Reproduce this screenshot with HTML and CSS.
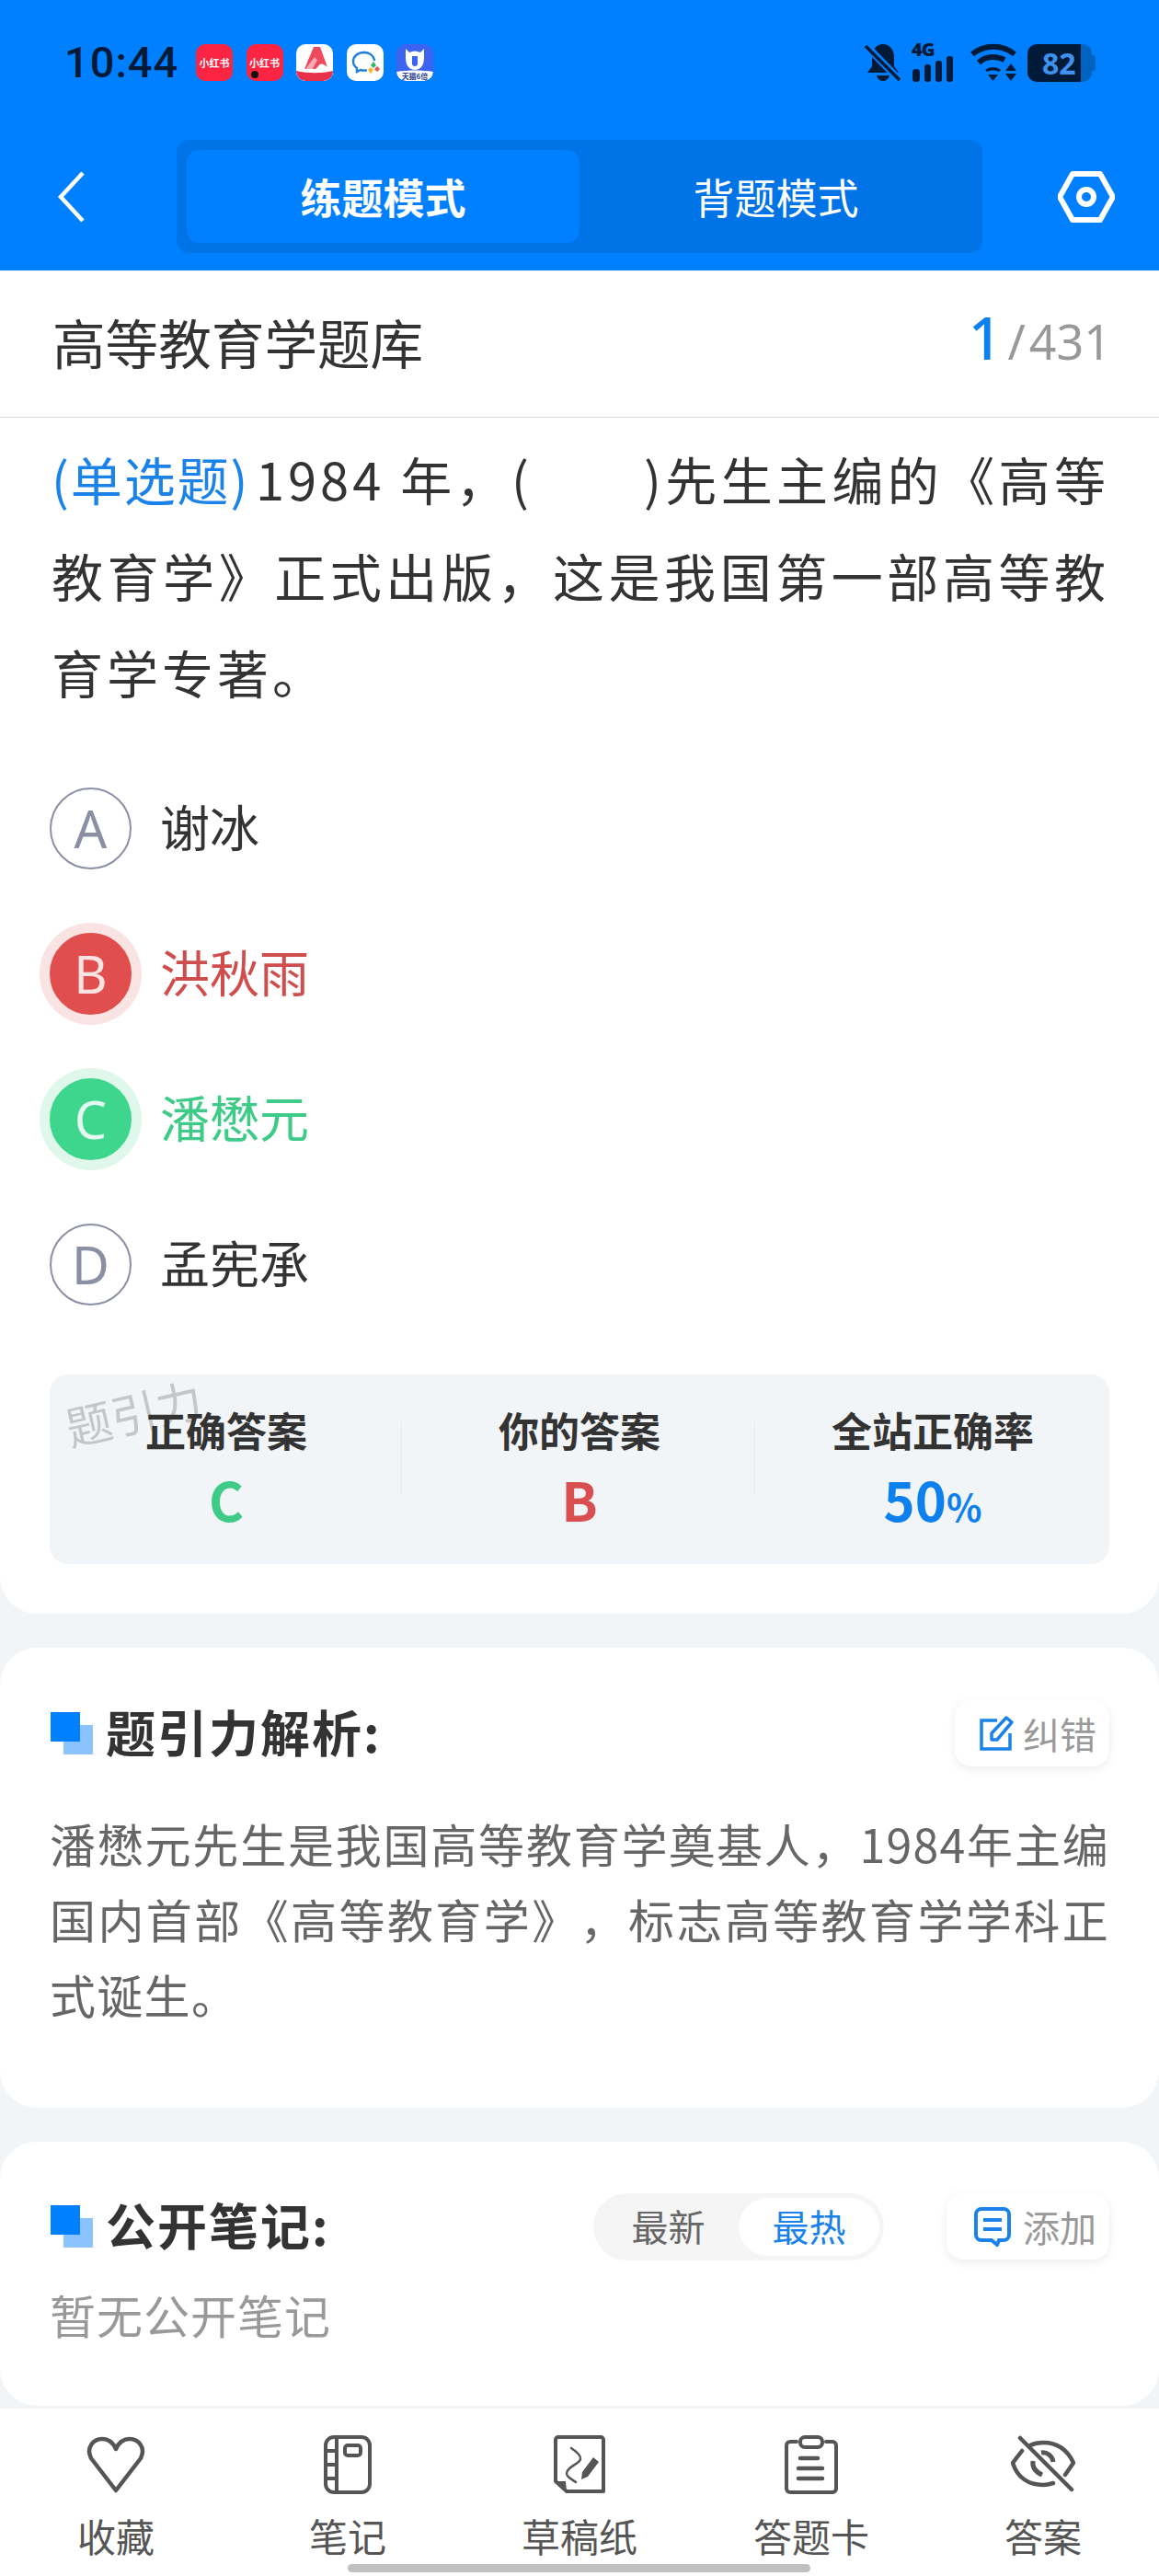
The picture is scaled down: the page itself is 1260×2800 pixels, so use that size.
FILE: index.html
```html
<!DOCTYPE html>
<html lang="zh-CN">
<head>
    <meta charset="UTF-8">
    <meta name="viewport" content="width=device-width, initial-scale=1.0">
    <title>高等教育学题库</title>
    <link rel="stylesheet" href="styles.css">
</head>
<body>
<div class="page">

    <!-- 顶部蓝色区域 -->
    <header class="header">
        <div class="status">
            <span class="time">10:44</span>
            <div class="apps">
                <div class="app red"><span>小红书</span></div>
                <div class="app red dot"><span>小红书</span></div>
                <div class="app white">
                    <svg viewBox="0 0 40 40" width="40" height="40">
                        <path d="M19 3h7l8 22c-4-4-8-5-10-1l-3 3H9z" fill="#ef4a5c"/>
                        <path d="M23 17l-5 10h-8l10-13z" fill="#f9a9b2"/>
                        <path d="M0 29c13 3 27 3 40 0v1a10 10 0 0 1-10 10H10A10 10 0 0 1 0 30z" fill="#e8304a"/>
                    </svg>
                </div>
                <div class="app white">
                    <svg viewBox="0 0 40 40" width="40" height="40">
                        <path d="M19 9c-7 0-12 4-12 10 0 3 1 5 4 7v4l4-2c2 .6 4 .8 6 .5" fill="none" stroke="#1f7fd8" stroke-width="2.400" stroke-linecap="round"/>
                        <path d="M19 9c5 0 10 3 11 8" fill="none" stroke="#1f7fd8" stroke-width="2.400" stroke-linecap="round"/>
                        <path d="M29 19l3 4-3 3-3-3z" fill="#38b56a"/>
                        <path d="M33 24l3 3-3 3-3-3z" fill="#f0524a"/>
                        <path d="M26 25l3 3-3 4-3-4z" fill="#f5b82e"/>
                    </svg>
                </div>
                <div class="app blue">
                    <svg viewBox="0 0 40 40" width="40" height="40">
                        <path d="M10 5l4 4c4-2 8-2 12 0l4-4v10c0 8-4 13-10 13S10 23 10 15z" fill="#fff"/>
                        <path d="M17 13h6v8a3 3 0 0 1-6 0z" fill="#3d64f0"/>
                        <path d="M0 30c13-2 27-2 40 0a10 10 0 0 1-10 10H10A10 10 0 0 1 0 30z" fill="#fff"/>
                        <text x="20" y="38" text-anchor="middle" font-size="8" font-weight="700" fill="#24408f">天猫6倍</text>
                    </svg>
                </div>
            </div>
            <div class="sys">
                <svg class="bell" viewBox="0 0 40 42" width="40" height="42">
                    <path d="M20 1c7 0 12 6 12 14v10l5 7H3l5-7V15C8 7 13 1 20 1z" fill="#001a38"/>
                    <path d="M13 35h14c-1 4-4 6-7 6s-6-2-7-6z" fill="#001a38"/>
                    <path d="M2 3l36 37" stroke="#0080ff" stroke-width="8"/>
                    <path d="M1 3l37 37" stroke="#001a38" stroke-width="3.500"/>
                </svg>
                <div class="signal">
                    <span class="net">4G</span>
                    <svg viewBox="0 0 48 28" width="48" height="28">
                        <rect x="1" y="14" width="8" height="14" rx="3.500"/>
                        <rect x="14" y="9" width="7" height="19" rx="3"/>
                        <rect x="26" y="5" width="7" height="23" rx="3"/>
                        <rect x="38" y="0" width="7" height="28" rx="3"/>
                    </svg>
                </div>
                <svg class="wifi" viewBox="0 0 52 42" width="52" height="42">
                    <path d="M3 12c13-11 33-11 46 0" fill="none" stroke="#001a38" stroke-width="6"/>
                    <path d="M10 21c9-8 23-8 32 0" fill="none" stroke="#001a38" stroke-width="6" stroke-dasharray="30 30"/>
                    <path d="M17 29c5-4 12-4 17 0l-2 2c-4-2-9-2-13 0z" fill="#001a38"/>
                    <path d="M20 34h11l-5.500 7z" fill="#001a38"/>
                    <path d="M45 22l6 8H39zM39 33h12l-6 8z" fill="#001a38"/>
                </svg>
                <div class="battery"><span class="level">82</span><i class="cap"></i></div>
            </div>
        </div>
        <nav class="topbar">
            <svg class="back" viewBox="0 0 32 56" width="32" height="56">
                <path d="M28 2L4 28l24 26" fill="none" stroke="#fff" stroke-width="4.500"/>
            </svg>
            <div class="tabs">
                <div class="tab on">练题模式</div>
                <div class="tab">背题模式</div>
            </div>
            <svg class="gear" viewBox="0 0 62 56" width="62" height="56">
                <path d="M2 28L16 3h30l14 25-14 25H16z" fill="none" stroke="#fff" stroke-width="6" stroke-linejoin="round"/>
                <circle cx="31" cy="28" r="8" fill="none" stroke="#fff" stroke-width="6"/>
            </svg>
        </nav>
    </header>

    <!-- 题目 -->
    <section class="card question">
        <div class="title-row">
            <span class="bank">高等教育学题库</span>
            <span class="count"><b>1</b><i>/</i>431</span>
        </div>
        <p class="stem"><span class="kind">(单选题)</span>1984 年，(　　)先生主编的《高等教育学》正式出版，这是我国第一部高等教育学专著。</p>
        <ul class="opts">
            <li class="opt"><span class="mark">A</span><span class="opt-text">谢冰</span></li>
            <li class="opt wrong"><span class="mark">B</span><span class="opt-text">洪秋雨</span></li>
            <li class="opt right"><span class="mark">C</span><span class="opt-text">潘懋元</span></li>
            <li class="opt"><span class="mark">D</span><span class="opt-text">孟宪承</span></li>
        </ul>
        <div class="stats">
            <span class="wm">题引力</span>
            <div class="stat">
                <div class="stat-name">正确答案</div>
                <div class="stat-val green">C</div>
            </div>
            <div class="stat">
                <div class="stat-name">你的答案</div>
                <div class="stat-val redtext">B</div>
            </div>
            <div class="stat">
                <div class="stat-name">全站正确率</div>
                <div class="stat-val bluetext">50<small>%</small></div>
            </div>
        </div>
    </section>

    <!-- 解析 -->
    <section class="card analysis">
        <div class="sec-head">
            <h2 class="sec-title"><i class="sq"></i>题引力解析:</h2>
            <div class="mini-btn">
                <svg viewBox="0 0 40 40" width="40" height="40">
                    <path d="M20 6H3v31h31V20" fill="none" stroke="#1a82e8" stroke-width="3.500"/>
                    <path d="M14 27v-7L30 3l6 5-16 19z" fill="none" stroke="#1a82e8" stroke-width="3.500" stroke-linejoin="round"/>
                </svg>
                纠错
            </div>
        </div>
        <p class="explain">潘懋元先生是我国高等教育学奠基人，1984年主编国内首部《高等教育学》，标志高等教育学学科正式诞生。</p>
    </section>

    <!-- 笔记 -->
    <section class="card notes">
        <div class="sec-head">
            <h2 class="sec-title"><i class="sq"></i>公开笔记:</h2>
            <div class="seg">
                <span class="seg-item">最新</span>
                <span class="seg-item on">最热</span>
            </div>
            <div class="mini-btn add">
                <svg viewBox="0 0 42 44" width="42" height="44">
                    <path d="M9 3h24a6 6 0 0 1 6 6v22a6 6 0 0 1-6 6h-5l-2 5-6-5H9a6 6 0 0 1-6-6V9a6 6 0 0 1 6-6z" fill="none" stroke="#1a82e8" stroke-width="4"/>
                    <path d="M11 15h20M11 25h20" stroke="#1a82e8" stroke-width="4"/>
                </svg>
                添加
            </div>
        </div>
        <p class="empty">暂无公开笔记</p>
    </section>

    <!-- 底部栏 -->
    <footer class="tabbar">
        <div class="item">
            <svg viewBox="0 0 64 64" width="64" height="64">
                <path d="M32 60L5 25C-1 13 8 4 17 4c7 0 12 4 15 11C35 8 40 4 47 4c9 0 18 9 12 21z" fill="none" stroke="#555" stroke-width="4.500" stroke-linejoin="round"/>
            </svg>
            <span>收藏</span>
        </div>
        <div class="item">
            <svg viewBox="0 0 64 64" width="64" height="64">
                <rect x="8" y="2" width="48" height="60" rx="9" fill="none" stroke="#555" stroke-width="4"/>
                <path d="M20 2v60M8 17h12M8 32h12M8 47h12" stroke="#555" stroke-width="4"/>
                <rect x="29" y="11" width="17" height="11" rx="3" fill="none" stroke="#555" stroke-width="4"/>
            </svg>
            <span>笔记</span>
        </div>
        <div class="item">
            <svg viewBox="0 0 64 64" width="64" height="64">
                <path d="M6 50V5a3 3 0 0 1 3-3h46a3 3 0 0 1 3 3v56H18z" fill="none" stroke="#555" stroke-width="4" stroke-linejoin="round"/>
                <path d="M6 50l11 0 1 12z" fill="#555"/>
                <path d="M23 14c6 4 11 8 10 12-1 5-14 8-15 15-1 4 6 7 10 10" fill="none" stroke="#555" stroke-width="2.500" stroke-linecap="round"/>
                <path d="M47 24l6 5-12 16-7 3 1-8z" fill="#555"/>
            </svg>
            <span>草稿纸</span>
        </div>
        <div class="item">
            <svg viewBox="0 0 64 64" width="64" height="64">
                <path d="M16 7H9a4 4 0 0 0-4 4v47a4 4 0 0 0 4 4h46a4 4 0 0 0 4-4V11a4 4 0 0 0-4-4h-7" fill="none" stroke="#555" stroke-width="4" stroke-linecap="round"/>
                <rect x="20" y="2" width="24" height="11" rx="5" fill="none" stroke="#555" stroke-width="4"/>
                <path d="M20 25h19M18 36h26M18 47h26" stroke="#555" stroke-width="4.500" stroke-linecap="round"/>
            </svg>
            <span>答题卡</span>
        </div>
        <div class="item">
            <svg viewBox="0 0 70 64" width="70" height="64">
                <path d="M12 17L2 30c5 16 17 24 33 24 4 0 8-1 11-2M21 11c4-2 9-3 14-3 16 0 27 9 33 22l-9 13" fill="none" stroke="#555" stroke-width="4.500" stroke-linecap="round"/>
                <path d="M10 3l56 56" stroke="#555" stroke-width="4.500" stroke-linecap="round"/>
                <path d="M33 19c6-1 12 3 13 10M24 28c-1 7 3 12 10 15" fill="none" stroke="#555" stroke-width="5"/>
            </svg>
            <span>答案</span>
        </div>
        <i class="home-bar"></i>
    </footer>
</div>
</body>
</html>
```

FILE: styles.css
```css
* {
    box-sizing: border-box;
}

body {
    margin: 0;
    background: #f2f5f8;
    font-family: "Noto Sans CJK SC", "Noto Sans", sans-serif;
    color: #333;
    text-spacing-trim: space-all;
}

.page {
    position: relative;
    width: 1260px;
    height: 2800px;
    overflow: hidden;
    display: flex;
    flex-direction: column;
}

/* header */
.header {
    height: 294px;
    background: #0080ff;
    padding-top: 47px;
}

.status {
    height: 42px;
    padding: 0 70px;
    display: flex;
    align-items: center;
}

.time {
    font-family: Roboto, sans-serif;
    font-size: 47px;
    font-weight: 500;
    line-height: 42px;
    color: #001a38;
    letter-spacing: 1px;
    width: 143px;
}

.apps {
    display: flex;
    gap: 14.500px;
}

.app {
    width: 40px;
    height: 40px;
    border-radius: 10px;
    overflow: hidden;
    position: relative;
    display: flex;
    align-items: center;
    justify-content: center;
    font-size: 11px;
    font-weight: 700;
    color: #fff;
    white-space: nowrap;
}

.app.red { background: #fb2543; }
.app.white { background: #fff; }
.app.blue { background: #3d64f0; }

.app.dot::after {
    content: "";
    position: absolute;
    left: 5px;
    bottom: 3px;
    width: 8px;
    height: 8px;
    border-radius: 50%;
    background: #111;
}

.sys {
    margin-left: auto;
    margin-right: -1px;
    display: flex;
    align-items: center;
}

.bell {
    margin-right: 11px;
}

.signal {
    width: 50px;
    height: 42px;
    position: relative;
    margin-right: 13px;
}

.signal svg {
    position: absolute;
    left: 0;
    bottom: 0;
    fill: #001a38;
}

.net {
    position: absolute;
    left: 0;
    top: -4px;
    font-family: "Open Sans", sans-serif;
    font-size: 20px;
    font-weight: 800;
    line-height: 22px;
    letter-spacing: -1px;
    color: #001a38;
}

.wifi {
    margin-right: 11px;
}

.battery {
    position: relative;
    width: 70px;
    height: 41px;
    border-radius: 10px;
    background: linear-gradient(90deg, #001a38 0, #001a38 58px, #0063c0 58px);
    margin-right: 4px;
}

.level {
    display: block;
    padding-left: 16px;
    font-family: "Open Sans", sans-serif;
    font-size: 32px;
    font-weight: 700;
    line-height: 41px;
    color: #3d92ee;
}

.cap {
    position: absolute;
    right: -4px;
    top: 12px;
    width: 4px;
    height: 17px;
    border-radius: 0 3px 3px 0;
    background: #0063c0;
}

.topbar {
    margin-top: 63px;
    height: 123px;
    display: flex;
    align-items: center;
    padding-left: 62px;
}

.back {
    margin-right: 98px;
}

.tabs {
    width: 876px;
    height: 123px;
    padding: 11px;
    border-radius: 14px;
    background: #0073e6;
    display: flex;
}

.tab {
    flex: 1;
    text-align: center;
    font-size: 45px;
    line-height: 101px;
    color: #fff;
    border-radius: 14px;
}

.tab.on {
    background: #0080ff;
    font-weight: 700;
}

.gear {
    margin-left: 82px;
}

/* cards */
.card {
    background: #fff;
    border-radius: 40px;
}

.question {
    height: 1460px;
    border-radius: 0 0 40px 40px;
}

.title-row {
    height: 160px;
    padding: 0 52px 6px 57px;
    border-bottom: 1px solid #d9d9d9;
    display: flex;
    align-items: center;
    justify-content: space-between;
}

.bank {
    font-size: 57.600px;
    line-height: 80px;
    color: #333;
}

.count {
    font-family: "Noto Sans", sans-serif;
    font-size: 52px;
    line-height: 80px;
    color: #999;
    display: flex;
    align-items: baseline;
    margin-bottom: 3px;
}

.count b {
    font-size: 64px;
    font-weight: 500;
    color: #0d80ee;
}

.count i {
    font-style: normal;
    margin: 0 4px 0 6px;
}

.stem {
    margin: 13px 54px 0 56px;
    font-size: 56px;
    line-height: 105px;
    letter-spacing: 4px;
    text-align: justify;
}

.kind {
    color: #1a82e8;
    letter-spacing: 1.500px;
    margin-right: 7px;
}

.opts {
    list-style: none;
    margin: 39px 0 0;
    padding: 0 54px;
}

.opt {
    height: 158px;
    display: flex;
    align-items: center;
    font-size: 54px;
    color: #333;
}

.opt-text {
    margin-bottom: 6px;
}

.mark {
    width: 89px;
    height: 89px;
    margin-right: 31px;
    border-radius: 50%;
    border: 2px solid #8b8fa3;
    display: flex;
    align-items: center;
    justify-content: center;
    font-family: "Noto Sans", sans-serif;
    font-weight: 400;
    font-size: 56px;
    color: #8b8fa3;
}

.wrong { color: #cf4d4d; }
.right { color: #3ecb87; }

.wrong .mark {
    background: #e04e4e;
    border-color: #e04e4e;
    color: #fbe3e3;
    box-shadow: 0 0 0 11px #f9e3e3;
}

.right .mark {
    background: #3dd68c;
    border-color: #3dd68c;
    color: #e4f9ef;
    box-shadow: 0 0 0 11px #e0f7ec;
}

.stats {
    position: relative;
    margin: 41px 54px 0;
    height: 206px;
    padding-top: 30px;
    border-radius: 20px;
    background: #f2f5f8;
    display: grid;
    grid-template-columns: repeat(3, 1fr);
}

.stat {
    position: relative;
    text-align: center;
}

.stat + .stat::before {
    content: "";
    position: absolute;
    left: -2px;
    top: 22px;
    width: 1px;
    height: 78px;
    background: #e6e9ec;
}

.stat-name {
    font-size: 44px;
    font-weight: 700;
    line-height: 60px;
}

.stat-val {
    margin-top: 5px;
    font-size: 58px;
    font-weight: 700;
    line-height: 80px;
}

.stat-val small {
    font-size: 40px;
}

.green { color: #3ecb87; }
.redtext { color: #d94f4f; }
.bluetext { color: #0d80ee; }

.wm {
    position: absolute;
    left: 16px;
    top: 10px;
    font-size: 50px;
    line-height: 60px;
    color: rgba(90, 90, 90, .3);
    transform: rotate(-13deg);
}

/* analysis + notes */
.analysis {
    margin-top: 37px;
    height: 500px;
    padding: 57px 54px 0;
}

.notes {
    margin-top: 37px;
    height: 287px;
    padding: 56px 54px 0;
}

.sec-head {
    height: 72px;
    display: flex;
    align-items: center;
}

.sec-title {
    margin: 0;
    font-size: 54px;
    font-weight: 700;
    line-height: 68px;
    letter-spacing: 2px;
    display: flex;
    align-items: center;
    color: #333;
    padding-bottom: 4px;
}

.sq {
    position: relative;
    width: 46px;
    height: 46px;
    margin: 4px 14px 0 1px;
    background: linear-gradient(#8bc3ff, #8bc3ff) right bottom / 32px 32px no-repeat;
}

.sq::before {
    content: "";
    position: absolute;
    left: 0;
    top: 0;
    width: 32px;
    height: 32px;
    background: #0080ff;
}

.mini-btn {
    margin-left: auto;
    height: 72px;
    padding: 0 14px 0 26px;
    border-radius: 18px;
    background: #fff;
    box-shadow: 0 3px 10px rgba(0, 0, 0, .08);
    display: flex;
    align-items: center;
    gap: 8px;
    font-size: 40px;
    line-height: 72px;
    color: #999;
}

.mini-btn.add {
    margin-left: 68px;
    padding: 0 14px 0 29px;
    gap: 12px;
}

.seg {
    margin-left: auto;
    width: 316px;
    height: 73px;
    padding: 5px;
    border-radius: 37px;
    background: #f5f5f5;
    display: flex;
    font-size: 40px;
    line-height: 60px;
}

.seg-item {
    flex: 1;
    text-align: center;
    color: #666;
    border-radius: 32px;
}

.seg-item.on {
    background: #fff;
    color: #1a82e8;
}

.explain {
    margin: 42px 0 0;
    font-size: 50px;
    line-height: 82px;
    letter-spacing: 1.300px;
    text-align: justify;
    color: #666;
}

.empty {
    margin: 24px 0 0;
    font-size: 50px;
    line-height: 70px;
    letter-spacing: 1px;
    color: #999;
}

/* bottom */
.tabbar {
    position: relative;
    margin-top: 3px;
    flex: 1;
    background: #fff;
    display: grid;
    grid-template-columns: repeat(5, 1fr);
    padding-top: 29px;
}

.item {
    display: flex;
    flex-direction: column;
    align-items: center;
    font-size: 42px;
    line-height: 60px;
    color: #555;
}

.item svg {
    margin-bottom: 15px;
}

.home-bar {
    position: absolute;
    left: 378px;
    bottom: 4px;
    width: 503px;
    height: 9px;
    border-radius: 5px;
    background: #c0c0c0;
}
```
